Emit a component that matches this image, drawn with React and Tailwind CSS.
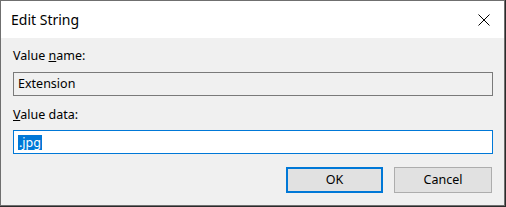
import React from 'react';

const font = { fontFamily: '"Noto Sans", "Liberation Sans", sans-serif' };

const App = () => {
  return (
    <div className="w-[506px] h-[207px] bg-[#2b2b2b]">
      <div
        className="w-[505px] h-[206px] border border-[#6f6f6f] bg-[#f0f0f0] flex flex-col text-black"
        style={font}
      >
        {/* Title bar */}
        <div className="h-[37px] bg-white flex items-center justify-between pl-[10px] pr-[14px] shrink-0">
          <span className="text-[14px] leading-none">Edit String</span>
          <svg width="12" height="12" viewBox="0 0 12 12" className="block">
            <path d="M0.5 0.5 L11.5 11.5 M11.5 0.5 L0.5 11.5" stroke="#000" strokeWidth="1" fill="none" />
          </svg>
        </div>

        {/* Body */}
        <div className="flex flex-col px-[12px]">
          <label className="mt-[10px] text-[12.5px] leading-[16px]">
            Value <u>n</u>ame:
          </label>
          <div className="mt-[8px] h-[24px] w-[480px] border border-[#7a7a7a] bg-[#f0f0f0] flex items-center pl-[4px] text-[12.5px]">
            Extension
          </div>

          <label className="mt-[11px] text-[12.5px] leading-[16px]">
            <u>V</u>alue data:
          </label>
          <div className="mt-[7px] h-[24px] w-[480px] border border-[#0078d7] bg-white flex items-center pl-[4px] text-[12.5px]">
            <span className="bg-[#0078d7] text-white leading-[15px] px-[1px]">.jpg</span>
          </div>

          <div className="mt-[13px] flex justify-end gap-[11px]">
            <button className="w-[97px] h-[26px] border-2 border-[#0078d7] bg-[#e1e1e1] text-[12.5px]">
              OK
            </button>
            <button className="w-[98px] h-[26px] border border-[#adadad] bg-[#e1e1e1] text-[12.5px]">
              Cancel
            </button>
          </div>
        </div>
      </div>
    </div>
  );
};

export default App;
